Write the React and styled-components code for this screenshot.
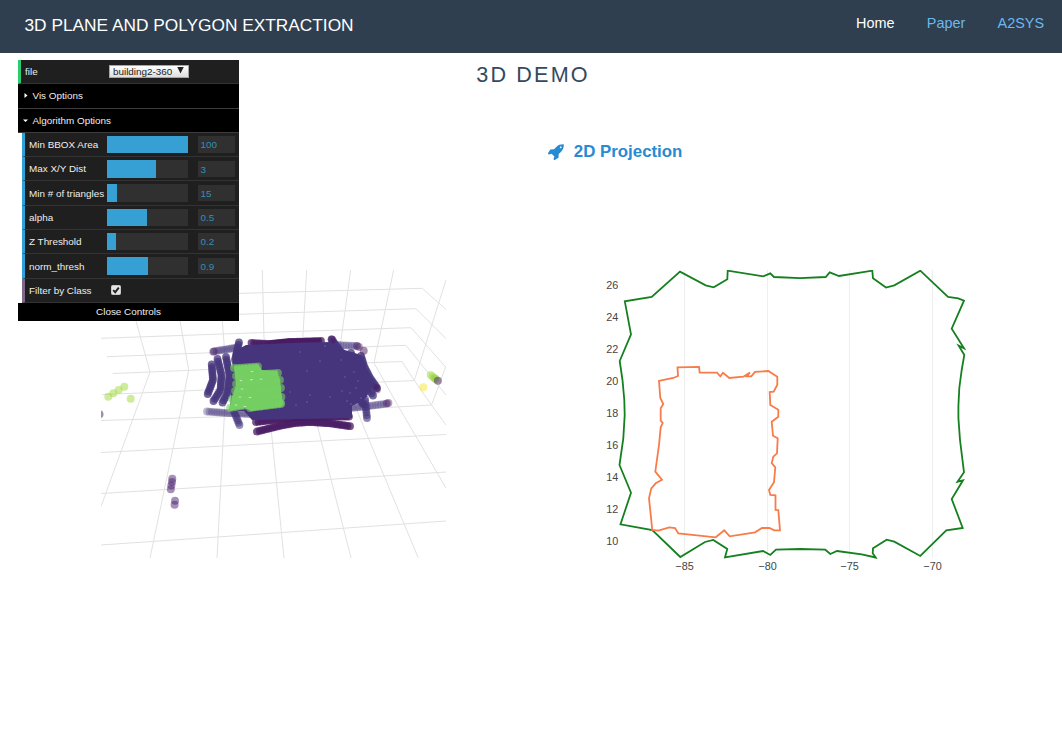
import React from "react";
import styled, { createGlobalStyle } from "styled-components";

const GlobalStyle = createGlobalStyle`
  * { box-sizing: border-box; }
  body {
    margin: 0;
    background: #fff;
    font-family: "Liberation Sans", Arial, sans-serif;
    overflow: hidden;
  }
`;

const Page = styled.div`
  position: relative;
  width: 1062px;
  height: 752px;
`;

const Header = styled.header`
  display: flex;
  justify-content: space-between;
  height: 53px;
  padding: 0 18px 0 24.5px;
  background: #2f3f4f;
`;

const Brand = styled.div`
  font-size: 17.3px;
  line-height: 50px;
  color: #fff;
`;

const Nav = styled.nav`
  display: flex;
  gap: 32.4px;
`;

const NavLink = styled.a`
  font-size: 14.4px;
  line-height: 46px;
  color: ${(p) => (p.$active ? "#fff" : "#6cb8ee")};
`;

const Heading = styled.h2`
  margin: 0;
  padding-top: 9px;
  text-align: center;
  font-size: 21.6px;
  font-weight: 400;
  line-height: 26px;
  letter-spacing: 2.16px;
  color: #34495e;
  text-indent: 4px;
`;

const SubHeading = styled.h3`
  display: flex;
  align-items: center;
  margin: 54px 0 0 547.5px;
  gap: 10.3px;
  height: 20px;
  font-size: 16.85px;
  font-weight: 700;
  color: #268bd2;

  svg { width: 16px; height: 16px; }
`;

const Plots = styled.div`
  display: flex;
  gap: 154px;
  margin-top: 108px;
  padding-left: 101px;

  svg { display: block; flex: none; }
`;

/* ---- control panel ---- */

const Panel = styled.aside`
  position: absolute;
  left: 18px;
  top: 60px;
  width: 221px;
  font-size: 9.9px;
  color: #eee;
`;

const Row = styled.div`
  display: flex;
  align-items: center;
  height: 24.3px;
  padding-left: 4px;
  margin-left: ${(p) => (p.$nested ? "4px" : "0")};
  border-left: 3px solid ${(p) => p.$accent};
  border-bottom: 1px solid #333;
  background: #1f1f1f;
`;

const Folder = styled.div`
  display: flex;
  align-items: center;
  gap: 4.5px;
  height: 24.3px;
  padding-left: 5px;
  border-bottom: 1px solid #3c3c3c;
  background: #000;

  svg { width: 5px; height: 5px; }
`;

const Name = styled.span`
  flex: 0 0 ${(p) => p.$w || 78}px;
  white-space: nowrap;
`;

const Select = styled.div`
  display: flex;
  align-items: center;
  justify-content: space-between;
  width: 80px;
  height: 13px;
  padding: 0 3px;
  border: 1px solid #a6a6a6;
  background: linear-gradient(#fff, #dedede);
  color: #222;
  white-space: nowrap;

  svg { width: 7px; height: 6.5px; margin: 0 1px 2px 0; }
`;

const Slider = styled.div`
  width: 81px;
  height: 17.5px;
  background: #303030;
`;

const Fill = styled.div`
  height: 100%;
  background: #36a0d4;
`;

const NumberBox = styled.div`
  width: 37px;
  height: 16.5px;
  margin-left: 10px;
  padding-left: 2.5px;
  background: #303030;
  color: #2f8fbe;
  line-height: 17.2px;
`;

const Check = styled.div`
  width: 10px;
  height: 10px;
  margin-left: 4px;
  border-radius: 1.5px;
  background: #e4e4e4;
  border: 1px solid #c8c8c8;

  svg { display: block; width: 8px; height: 8px; }
`;

const CloseBar = styled.div`
  height: 18px;
  background: #000;
  text-align: center;
  line-height: 17px;
`;

const BLUE = "#2fa1d6";
const sliders = [
  ["Min BBOX Area", 100, "100"],
  ["Max X/Y Dist", 60.3, "3"],
  ["Min # of triangles", 12.3, "15"],
  ["alpha", 49.5, "0.5"],
  ["Z Threshold", 11, "0.2"],
  ["norm_thresh", 50.6, "0.9"],
];

function Controls() {
  return (
    <Panel>
      <Row $accent="#2ecc71">
        <Name $w={84}>file</Name>
        <Select>
          building2-360
          <svg viewBox="0 0 7 7"><path d="M0 0H7L3.5 7Z" fill="#222" /></svg>
        </Select>
      </Row>
      <Folder>
        <svg viewBox="0 0 5 5"><path d="M1.5 0L4.5 2.5L1.5 5Z" fill="#fff" /></svg>
        Vis Options
      </Folder>
      <Folder>
        <svg viewBox="0 0 5 5"><path d="M0 1.5H5L2.5 4Z" fill="#fff" /></svg>
        Algorithm Options
      </Folder>
      {sliders.map(([name, pct, value]) => (
        <Row key={name} $nested $accent={BLUE}>
          <Name>{name}</Name>
          <Slider><Fill style={{ width: `${pct}%` }} /></Slider>
          <NumberBox>{value}</NumberBox>
        </Row>
      ))}
      <Row $nested $accent="#806787">
        <Name>Filter by Class</Name>
        <Check>
          <svg viewBox="0 0 8 8"><path d="M1.2 4.2L3.2 6.2L6.8 1.6" fill="none" stroke="#222" strokeWidth="1.9" /></svg>
        </Check>
      </Row>
      <CloseBar>Close Controls</CloseBar>
    </Panel>
  );
}

function Rocket() {
  return (
    <svg viewBox="40 110 1640 1640" fill="currentColor">
      <path d="M1440 448q0-40-28-68t-68-28-68 28-28 68 28 68 68 28 68-28 28-68zm224-288q0 249-75.5 430.5t-253.5 360.5q-81 80-195 176l-20 379q-2 16-16 26l-384 224q-7 4-16 4-12 0-23-9l-64-64q-13-14-8-32l85-276-281-281-276 85q-3 1-9 1-14 0-23-9l-64-64q-17-19-5-39l224-384q10-14 26-16l379-20q96-114 176-195 188-187 358-258t431-71q14 0 24 9.5t10 22.5z" />
    </svg>
  );
}

/* ---- 3D point cloud ---- */

const gridLines = [
  "101,545 280,532.7 446,521",
  "101,493.5 280,482.5 446,472",
  "101,452.5 280,443 446,434.5",
  "101,420.5 225,416.7 431.5,405",
  "102,394.7 414.3,380.5",
  "112.7,373.5 150,372 366,362.8 402,361.5 414.3,380.5 431.5,405 446,425",
  "107,356.7 406,345.3 446,395",
  "101,338.3 270,332.3 411,327.7 446,367.5",
  "101,318.5 239,314.3 416,308.7 446,338.5",
  "101,297 239,293.4 422.3,288.3 446,309.5",
  "306.7,270 302.7,340 300,366",
  "350.7,270 341,340 338,364",
  "393.7,270 374,363 397,404 446,488",
  "446,280 414.3,380.5",
  "446,366 431.5,405",
  "262.3,270 264,338 264,367",
  "219,270 222.3,321 226,369 224.3,416.7 217,558",
  "172,270 180,321 188.7,370 181,410 150,558",
  "124,270 136,321 150,372 101,506.5",
  "264,367 271.5,433 284,558",
  "300,366 317.7,427 351,558",
  "338,364 368.3,438 418.3,558",
];

const INDIGO = "#46357c";
const PURPLE = "#481b63";

const trails = [
  { c: INDIGO, p: [[211.7, 364.5], [213, 380], [207.7, 394]] },
  { c: INDIGO, p: [[217.5, 359], [221.5, 375], [220.5, 390], [213.5, 401]] },
  { c: INDIGO, p: [[226, 357], [229.5, 375], [227.5, 393], [222.5, 402.5]] },
  { c: INDIGO, p: [[214, 351.3], [236, 347.7]], o: 0.4 },
  { c: PURPLE, p: [[213, 351.8], [214, 351.5]], o: 0.3 },
  { c: INDIGO, p: [[239, 342.5], [235, 360]] },
  { c: PURPLE, p: [[251.5, 343], [270, 344], [290, 342], [321, 341]] },
  { c: INDIGO, p: [[331.7, 339.5], [344, 356]] },
  { c: PURPLE, p: [[331.5, 339.3], [332.5, 340]], o: 0.4 },
  { c: INDIGO, p: [[338, 345], [357, 346]], o: 0.35 },
  { c: PURPLE, p: [[357, 346], [359, 347]], o: 0.4 },
  { c: INDIGO, p: [[361, 356], [364, 366], [370, 378], [377, 388]] },
  { c: PURPLE, p: [[376, 388], [377, 389.5]], o: 0.4 },
  { c: INDIGO, p: [[351, 353], [360, 376], [373, 395.5]] },
  { c: INDIGO, p: [[340, 365], [352, 390], [363, 404]] },
  { c: INDIGO, p: [[365, 399], [367, 418]], o: 0.6 },
  { c: INDIGO, p: [[345, 408.5], [365, 406.5], [386, 403.7]], o: 0.35 },
  { c: PURPLE, p: [[387, 403.3], [388.5, 403]], o: 0.4 },
  { c: INDIGO, p: [[207, 411.5], [227, 413], [250, 414]], o: 0.35 },
  { c: INDIGO, p: [[233, 409], [239.5, 425]], o: 0.55 },
  { c: PURPLE, p: [[256, 422], [300, 417], [349, 416.5]] },
  { c: PURPLE, p: [[257, 431.5], [280, 425.8], [295, 423], [310, 422], [330, 423.3], [350, 426.2]] },
];

const greenTrails = [
  [[234, 368], [258, 366.5]],
  [[236, 376], [278, 373]],
  [[236, 384], [280, 380]],
  [[235, 391], [281, 388]],
  [[232, 399], [281.5, 397]],
  [[230, 408], [255, 404], [281, 403]],
  [[250, 408], [281, 404]],
];

const loose = [
  ["#a0d939", 108.3, 396.7], ["#a0d939", 113.3, 393.3], ["#a0d939", 118.7, 390],
  ["#a0d939", 124.3, 386.7], ["#a0d939", 130.7, 398.7],
  ["#a0d939", 430.7, 375], ["#a0d939", 432.7, 376.7], ["#8fd13c", 434.7, 378.3], ["#8fd13c", 435.7, 379.3],
  [PURPLE, 437.9, 380.7], ["#f8e52c", 423.3, 387.3], [PURPLE, 363.7, 350.8], [PURPLE, 99.5, 414.3],
  ["#4b2470", 172.3, 478.7], ["#4b2470", 172, 482], ["#4b2470", 171.3, 485.5], ["#4b2470", 170.8, 489.3],
  ["#4b2470", 175, 500.8], ["#4b2470", 174.6, 504.8],
];

const specks = [
  [252, 371.5], [251.5, 379.7], [241, 380.5], [261, 379], [242, 389],
  [240, 397], [250, 397.5], [245, 406.5], [236, 405],
];

const dimSpecks = [
  [290, 392], [307, 371], [320, 361], [310, 395], [330, 397], [345, 377], [350, 393],
  [325, 346], [300, 352], [307, 402], [341, 360], [296, 405], [347, 401], [351, 404],
  [361, 398], [356, 388], [354, 372], [358, 381], [342, 391],
];

function samples(points, step) {
  const out = [];
  for (let i = 0; i < points.length - 1; i++) {
    const [x1, y1] = points[i];
    const [x2, y2] = points[i + 1];
    const n = Math.max(1, Math.round(Math.hypot(x2 - x1, y2 - y1) / step));
    for (let k = i === 0 ? 0 : 1; k <= n; k++) {
      out.push([x1 + ((x2 - x1) * k) / n, y1 + ((y2 - y1) * k) / n]);
    }
  }
  return out;
}

function Trail({ points, color, opacity = 0.75, step = 2.6 }) {
  return (
    <g fill={color} fillOpacity={opacity}>
      {samples(points, step).map(([x, y], i) => <circle key={i} cx={x} cy={y} r={3.9} />)}
    </g>
  );
}

function PointCloud() {
  return (
    <svg width="345" height="288" viewBox="101 270 345 288">
      <g fill="none" stroke="#e1e1e1" strokeWidth="1">
        {gridLines.map((p) => <polyline key={p} points={p} />)}
      </g>
      {trails.map((t, i) => <Trail key={i} points={t.p} color={t.c} opacity={t.o} />)}
      <path
        d="M233 352L246 345L290 343L331 342L338 348L348 351L361 355L366 368L375 386L370 390L366 398L358 403L352 406V418L300 419L252 420L244 411L230 411Z"
        fill={INDIGO}
      />
      <path d="M266 341L290 338.6L321 338.5V341.5L290 342.5L266 343.5Z" fill={PURPLE} />
      <path d="M234 366L258 364L262 370L277 371L280 380L281 390L283 404L281 407L251 411L245 408L229 411L232 397L236 385Z" fill="#75cf62" />
      {greenTrails.map((p, i) => <Trail key={i} points={p} color="#75cf62" opacity={0.6} step={3.5} />)}
      <g fill="#c9edc0">{specks.map(([x, y], i) => <ellipse key={i} cx={x} cy={y} rx="1.5" ry="0.6" />)}</g>
      <g fill="#7569a0">{dimSpecks.map(([x, y], i) => <circle key={i} cx={x} cy={y} r="0.7" />)}</g>
      {loose.map(([c, x, y], i) => <circle key={i} cx={x} cy={y} r="4" fill={c} fillOpacity="0.5" />)}
    </svg>
  );
}

/* ---- 2D projection ---- */

const outer =
  "619.7,361 631,334.3 624.8,301.3 651.7,297 680,271.7 705.7,285.3 713.7,287.3 727.3,279.3 727.7,270.7 763.3,276.3 770.3,273.3 774,277 800,278.2 825.7,277 829.7,272.3 839,276 872.3,270.7 873,278.3 886,287.5 894.3,285.3 920.3,270.7 948,297 958.3,298.3 964,300.7 951.7,328.7 964,348.3 958.7,345.7 964.3,355 961.7,370 959.3,388 958.4,406 958.4,418 960,440 964,472.3 957.5,481.7 963,480.3 951.7,499 962.7,528 946.3,530.3 920.3,556 894.3,541.7 886.7,539.7 873,548.3 872.7,553.3 875.7,557.5 861.7,554.3 837,551 830.3,554 825.3,549.7 800,549 776,549.7 770.3,555 763,551 725,557.3 727.3,549 713.3,540 705,542 680.3,557 652.3,530 620.5,524.3 631,492.7 619.5,465 623.3,438.3 624.7,415 624.3,400 622.5,380";

const inner =
  "659,380.8 673.3,378 678,376 677.5,367.3 699,366.8 699.7,372.7 717,372.7 720.3,376.3 723,372.7 729.3,378 743.3,376.7 750,372.5 746.7,376.3 751.3,376.3 755,371.9 768.3,371 777.3,376.7 777.3,384.7 773.7,391.7 769.7,392 770.3,405 778.3,409.7 778.3,416.7 771.7,421.7 773,435.7 777.7,438.3 777,453.3 773.3,456.7 771.7,463 775.3,467.3 774,482.3 769,490 770.3,495 775.5,495.3 775.5,509.8 778.3,510 780,530.3 774.3,530.3 769.3,528 762,528 755,532.3 729.7,536.3 724.3,530.3 715.7,537.3 678.3,533.3 675,528 669.3,527.3 658.3,530.7 652.3,530 649,498.3 651.3,488.3 655.7,483.3 662,479.7 655.3,471.7 659,445 660.7,427.3 662.7,423 660.7,420.7 660.7,408.3 663.3,404 660.3,398";

const AxisText = styled.text`
  font-family: "Liberation Sans", Arial, sans-serif;
  font-size: 10.8px;
  fill: #444;
`;

const xTicks = [[684.5, "−85"], [767.5, "−80"], [849.5, "−75"], [932.5, "−70"]];
const yTicks = [26, 24, 22, 20, 18, 16, 14, 12, 10];

function Projection() {
  return (
    <svg width="370" height="310" viewBox="600 270 370 310">
      {xTicks.map(([x, label]) => (
        <g key={label}>
          <path d={`M${x} 270V558`} stroke="#eee" />
          <AxisText x={x} y="570" textAnchor="middle">{label}</AxisText>
        </g>
      ))}
      {yTicks.map((v, i) => (
        <AxisText key={v} x="618.3" y={289.2 + i * 32} textAnchor="end">{v}</AxisText>
      ))}
      <g fill="none" strokeWidth="1.8">
        <polygon points={outer} stroke="#15801f" />
        <polygon points={inner} stroke="#f77c4a" />
      </g>
    </svg>
  );
}

export default function App() {
  return (
    <Page>
      <GlobalStyle />
      <Header>
        <Brand>3D PLANE AND POLYGON EXTRACTION</Brand>
        <Nav>
          <NavLink $active>Home</NavLink>
          <NavLink>Paper</NavLink>
          <NavLink>A2SYS</NavLink>
        </Nav>
      </Header>
      <Heading>3D DEMO</Heading>
      <SubHeading><Rocket />2D Projection</SubHeading>
      <Plots>
        <PointCloud />
        <Projection />
      </Plots>
      <Controls />
    </Page>
  );
}
